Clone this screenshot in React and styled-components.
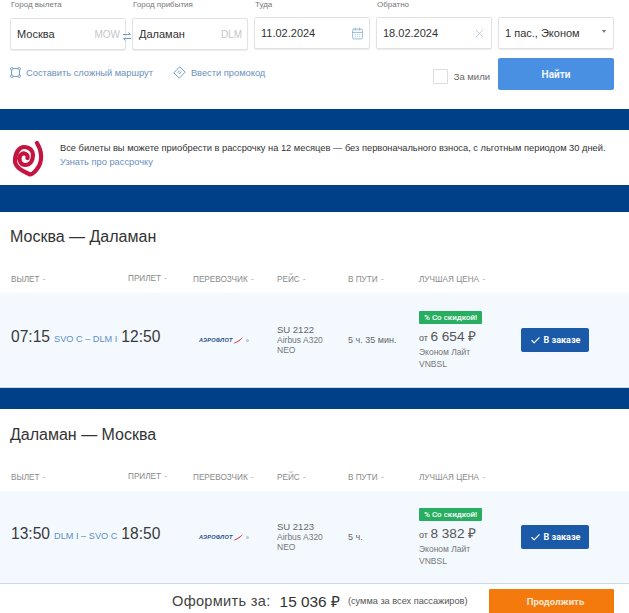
import styled, { createGlobalStyle } from "styled-components";
import { CalendarDays, X, Check } from "lucide-react";

const GlobalStyle = createGlobalStyle`
    html, body {
        margin: 0;
        padding: 0;
        background: #FFFFFF;
        font-family: "Liberation Sans", Arial, sans-serif;
        color: #333333;
    }
`;

const flights = [
    {
        id: 1,
        title: "Москва — Даламан",
        from: "07:15",
        route: "SVO C – DLM I",
        to: "12:50",
        number: "SU 2122",
        duration: "5 ч. 35 мин.",
        price: "6 654",
        plane: "Airbus A320",
        rowHeight: 95,
        top: 0,
    },
    {
        id: 2,
        title: "Даламан — Москва",
        from: "13:50",
        route: "DLM I – SVO C",
        to: "18:50",
        number: "SU 2123",
        duration: "5 ч.",
        price: "8 382",
        plane: "Airbus A320",
        rowHeight: 93,
        top: 1,
    },
];

const columns = ["ВЫЛЕТ", "ПРИЛЕТ", "ПЕРЕВОЗЧИК", "РЕЙС", "В ПУТИ", "ЛУЧШАЯ ЦЕНА"];

function RouteIcon() {
    return (
        <svg width="11" height="11" viewBox="0 0 11 11" fill="none" stroke="#6f9fc9" strokeWidth="1">
            <rect x="1.5" y="1.5" width="8" height="8" rx="1" />
            <circle cx="1.8" cy="1.8" r="1.3" fill="#fff" />
            <circle cx="9.2" cy="1.8" r="1.3" fill="#fff" />
            <circle cx="1.8" cy="9.2" r="1.3" fill="#fff" />
            <circle cx="9.2" cy="9.2" r="1.3" fill="#fff" />
        </svg>
    );
}

function PromoIcon() {
    return (
        <svg width="13" height="13" viewBox="0 0 13 13" fill="none" stroke="#6f9fc9" strokeWidth="1">
            <path d="M6.8 0.8 L12.2 6.2 L6.2 12.2 L0.8 6.8 Z" />
            <path d="M4.6 6.8 L7 4.4 M6 8 L8.4 5.6" />
        </svg>
    );
}

function SwapIcon() {
    return (
        <svg width="8" height="9" viewBox="0 0 8 9" fill="none" stroke="#6f9fc9" strokeWidth="1">
            <path d="M0 2.5 H7.5 L5.5 0.5" />
            <path d="M8 6.5 H0.5 L2.5 8.5" />
        </svg>
    );
}

function SwirlLogo() {
    return (
        <svg width="33" height="36" viewBox="0 0 33 36" fill="none" stroke="#c4143f" strokeWidth="4.2" strokeLinecap="round">
            <path d="M25 2 C30 10 31 20 25 28 C22 32 19 34 17 33 C10 30 3 26 3 20 C3 12 7 6 12 6 C18 6 21 10 21 14 C21 20 18 24 13 24 C9 24 7.5 20 7.5 17.5 C7.5 14 10 12 12.5 12.5 C15 13 16 15 15.5 17" />
        </svg>
    );
}

function AeroflotLogo() {
    return (
        <Carrier>
            <CarrierName>АЭРОФЛОТ</CarrierName>
            <svg width="11" height="7" viewBox="0 0 12 8">
                <path d="M0 7 C3 6 7 4 11 0 C9 4 5 6 2 7 Z" fill="#c8202f" />
            </svg>
            <CarrierMark />
        </Carrier>
    );
}

function SearchField({ label, value, code, low, children }) {
    return (
        <Field>
            <FieldLabel>{label}</FieldLabel>
            <FieldBox $low={low}>
                <FieldValue>{value}</FieldValue>
                {code && <FieldCode>{code}</FieldCode>}
                {children}
            </FieldBox>
        </Field>
    );
}

function Flight({ flight }) {
    return (
        <FlightSection $top={flight.top}>
            <DirectionTitle>{flight.title}</DirectionTitle>
            <TableHead>
                {columns.map((name, index) => (
                    <HeadCell key={name} $raised={index === 1}>{name} <Sort>-</Sort></HeadCell>
                ))}
            </TableHead>
            <Row $height={flight.rowHeight}>
                <RouteCell>
                    <Time>{flight.from}</Time>
                    <Airports>{flight.route}</Airports>
                    <Time>{flight.to}</Time>
                </RouteCell>
                <AeroflotLogo />
                <Plane>
                    <PlaneNumber>{flight.number}</PlaneNumber>
                    <Small>{flight.plane}</Small>
                    <Small>NEO</Small>
                </Plane>
                <Duration>{flight.duration}</Duration>
                <PriceCell>
                    <Badge>% Со скидкой!</Badge>
                    <Price>от <PriceValue>{flight.price} ₽</PriceValue></Price>
                    <PriceNote>Эконом Лайт</PriceNote>
                    <PriceNote>VNBSL</PriceNote>
                </PriceCell>
                <OrderButton><Check size={11} strokeWidth={2.5} /> В заказе</OrderButton>
            </Row>
        </FlightSection>
    );
}

export default function App() {
    return (
        <Page>
            <GlobalStyle />
            <SearchForm>
                <Fields>
                    <SearchField label="Город вылета" value="Москва" code="MOW" low />
                    <SwapBox><SwapIcon /></SwapBox>
                    <SearchField label="Город прибытия" value="Даламан" code="DLM" low />
                    <SearchField label="Туда" value="11.02.2024">
                        <CalendarDays size={13} color="#7fb0cc" strokeWidth={1.5} />
                    </SearchField>
                    <SearchField label="Обратно" value="18.02.2024">
                        <X size={13} color="#a9c9dc" strokeWidth={1.5} />
                    </SearchField>
                    <SearchField label="&nbsp;" value="1 пас., Эконом">
                        <Caret />
                    </SearchField>
                </Fields>
                <Actions>
                    <FormLink><RouteIcon /> Составить сложный маршрут</FormLink>
                    <FormLink $gap><PromoIcon /> Ввести промокод</FormLink>
                    <Miles><MilesBox /> За мили</Miles>
                    <FindButton>Найти</FindButton>
                </Actions>
            </SearchForm>
            <Band $height={21} />
            <Installment>
                <SwirlLogo />
                <div>
                    <InstallmentText>Все билеты вы можете приобрести в рассрочку на 12 месяцев — без первоначального взноса, с льготным периодом 30 дней.</InstallmentText>
                    <InstallmentLink>Узнать про рассрочку</InstallmentLink>
                </div>
            </Installment>
            <Band $height={27} />
            <Flight flight={flights[0]} />
            <Band $height={21} />
            <Flight flight={flights[1]} />
            <Footer>
                <FooterLabel>Оформить за:</FooterLabel>
                <FooterSum>15 036 ₽</FooterSum>
                <FooterNote>(сумма за всех пассажиров)</FooterNote>
                <ContinueButton>Продолжить</ContinueButton>
            </Footer>
        </Page>
    );
}

const Page = styled.div`
    width: 629px;
    height: 613px;
    overflow: hidden;
`;

const SearchForm = styled.div`
    height: 109px;
    padding-left: 10px;
    box-sizing: border-box;
`;

const Fields = styled.div`
    display: flex;
    gap: 6px;
    position: relative;
`;

const Field = styled.div`
    width: 116px;
`;

const FieldLabel = styled.div`
    height: 17px;
    font-size: 8px;
    line-height: 10px;
    color: #777777;
    padding-left: 1px;
`;

const FieldBox = styled.div`
    height: 32px;
    margin-top: ${props => props.$low ? "1px" : "0"};
    box-sizing: border-box;
    border: 1px solid #e2e2e2;
    border-radius: 2px;
    box-shadow: 0 1px 1px #ececec;
    padding: 0 5px 0 6px;
    display: flex;
    align-items: center;
    justify-content: space-between;
    background: #FFFFFF;
`;

const FieldValue = styled.span`
    font-size: 11px;
    color: #333333;
`;

const FieldCode = styled.span`
    font-size: 10px;
    color: #c6c6c6;
`;

const Caret = styled.span`
    width: 0;
    height: 0;
    margin: 0 2px 3px 0;
    border-left: 2px solid transparent;
    border-right: 2px solid transparent;
    border-top: 3px solid #777777;
`;

const SwapBox = styled.div`
    position: absolute;
    left: 113px;
    top: 27px;
    z-index: 1;
`;

const Actions = styled.div`
    display: flex;
    align-items: flex-start;
    margin-top: 8px;
    height: 32px;
`;

const FormLink = styled.a`
    display: flex;
    align-items: center;
    gap: 5px;
    font-size: 9.3px;
    color: #6b8fbd;
    height: 11px;
    margin-top: 9px;
    margin-left: ${props => props.$gap ? "20px" : "0"};
`;

const Miles = styled.label`
    display: flex;
    align-items: center;
    gap: 6px;
    margin-left: auto;
    margin-top: 11px;
    font-size: 9.5px;
    color: #666666;
`;

const MilesBox = styled.span`
    width: 13px;
    height: 13px;
    border: 1px solid #dddddd;
    border-radius: 1px;
`;

const FindButton = styled.button`
    width: 116px;
    height: 32px;
    margin: 0 15px 0 8px;
    border: none;
    border-radius: 2px;
    background: #4a90e2;
    color: #eef5fd;
    font-family: Roboto, sans-serif;
    font-size: 10px;
    font-weight: 700;
`;

const Band = styled.div`
    height: ${props => props.$height}px;
    background: #004088;
`;

const Installment = styled.div`
    height: 55px;
    box-sizing: border-box;
    padding: 11px 0 0 12px;
    display: flex;
    gap: 15px;
`;

const InstallmentText = styled.div`
    font-size: 9.3px;
    line-height: 12px;
    margin-top: 1px;
    white-space: nowrap;
    color: #333333;
`;

const InstallmentLink = styled.a`
    display: block;
    font-size: 9.3px;
    line-height: 12px;
    margin-top: 2px;
    color: #6b8fbd;
`;

const FlightSection = styled.section`
    padding-top: ${props => props.$top}px;
`;

const DirectionTitle = styled.h2`
    margin: 0;
    height: 51px;
    padding: 15px 0 0 10px;
    box-sizing: border-box;
    font-size: 16px;
    line-height: 19px;
    font-weight: 400;
    color: #333333;
`;

const gridColumns = "117px 65px 84px 71px 71px 102px 1fr";

const TableHead = styled.div`
    display: grid;
    grid-template-columns: ${gridColumns};
    height: 30px;
    padding: 12px 0 0 11px;
    box-sizing: border-box;
    align-items: start;
`;

const HeadCell = styled.div`
    font-size: 8.2px;
    line-height: 10px;
    color: #8a8a8a;
    white-space: nowrap;
    margin-top: ${props => props.$raised ? "-1px" : "0"};
`;

const Sort = styled.span`
    color: #aaaaaa;
    margin-left: 1px;
`;

const Row = styled.div`
    display: grid;
    grid-template-columns: ${gridColumns};
    height: ${props => props.$height}px;
    padding-left: 11px;
    box-sizing: border-box;
    align-items: center;
    background: #f3f9fe;
    border-bottom: 1px solid #c9dbe6;
`;

const RouteCell = styled.div`
    grid-column: span 2;
    display: flex;
    align-items: baseline;
    white-space: nowrap;
    padding-bottom: 6px;
`;

const Time = styled.span`
    font-size: 15.6px;
    color: #3a3a3a;
`;

const Airports = styled.span`
    font-size: 9.2px;
    color: #5f8fc5;
    margin: 0 4px;
`;

const Carrier = styled.div`
    display: flex;
    align-items: center;
    padding-left: 6px;
`;

const CarrierName = styled.span`
    font-size: 5.6px;
    font-weight: 700;
    font-style: italic;
    color: #2a4d8a;
    letter-spacing: 0.25px;
`;

const CarrierMark = styled.span`
    width: 3px;
    height: 3px;
    margin-left: 2px;
    border-radius: 50%;
    background: #b9c8d8;
`;

const Plane = styled.div`
    display: flex;
    flex-direction: column;
    padding-bottom: 2px;
`;

const PlaneNumber = styled.span`
    font-size: 9.5px;
    line-height: 11px;
    color: #666666;
`;

const Small = styled.span`
    font-size: 8.5px;
    line-height: 10px;
    color: #777777;
    white-space: nowrap;
`;

const Duration = styled.div`
    font-size: 9px;
    color: #666666;
    white-space: nowrap;
`;

const PriceCell = styled.div`
    display: flex;
    flex-direction: column;
    align-items: flex-start;
`;

const Badge = styled.span`
    height: 13px;
    padding: 0 5px;
    background: #27ae60;
    border-radius: 1px;
    color: #FFFFFF;
    font-family: Roboto, sans-serif;
    font-size: 8px;
    font-weight: 500;
    line-height: 13px;
    white-space: nowrap;
`;

const Price = styled.div`
    margin-top: 5px;
    font-size: 9px;
    line-height: 16px;
    color: #555555;
    white-space: nowrap;
`;

const PriceValue = styled.span`
    font-size: 13.6px;
`;

const PriceNote = styled.span`
    font-size: 8.5px;
    line-height: 12px;
    color: #777777;
    white-space: nowrap;
`;

const OrderButton = styled.button`
    width: 68px;
    height: 24px;
    padding: 0;
    display: flex;
    align-items: center;
    justify-content: center;
    gap: 3px;
    border: none;
    border-radius: 2px;
    background: #1a5aa8;
    color: #FFFFFF;
    font-family: Roboto, sans-serif;
    font-size: 9px;
    font-weight: 700;
    white-space: nowrap;
`;

const Footer = styled.div`
    height: 29px;
    box-sizing: border-box;
    display: flex;
    align-items: center;
    padding: 5px 0 0 172px;
`;

const FooterLabel = styled.span`
    font-size: 14.6px;
    color: #444444;
    letter-spacing: 0.3px;
`;

const FooterSum = styled.span`
    font-size: 15.4px;
    color: #333333;
    margin-left: 9px;
`;

const FooterNote = styled.span`
    font-size: 9.2px;
    color: #555555;
    margin-left: 8px;
`;

const ContinueButton = styled.button`
    width: 125px;
    height: 24px;
    margin-left: auto;
    margin-right: 15px;
    padding-left: 14px;
    border: none;
    border-radius: 1px 1px 0 0;
    background: #f47a0e;
    color: #f7e6d2;
    font-family: Roboto, sans-serif;
    font-size: 9.5px;
    font-weight: 700;
`;
